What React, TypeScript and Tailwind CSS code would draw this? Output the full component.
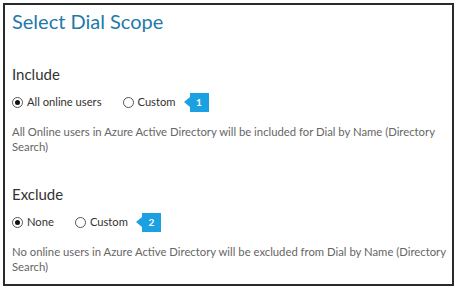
import React from "react";

function Radio({ checked, label }: { checked?: boolean; label: string }) {
  return (
    <label className="flex items-center">
      <span className="w-[11px] h-[11px] rounded-full border border-[#555] flex items-center justify-center bg-white">
        {checked && <span className="w-[5px] h-[5px] rounded-full bg-[#111]" />}
      </span>
      <span className="ml-[4px] text-[11.2px] leading-[20px] text-[#333]">{label}</span>
    </label>
  );
}

function Badge({ n }: { n: string }) {
  return (
    <div className="flex items-center">
      <span className="w-0 h-0 border-y-[5px] border-y-transparent border-r-[6px] border-r-[#1ba1e2]" />
      <span className="w-[19px] h-[19px] bg-[#1ba1e2] text-white text-[10px] font-bold flex items-center justify-center">
        {n}
      </span>
    </div>
  );
}

function Section({
  title,
  first,
  second,
  n,
  desc,
  mt,
}: {
  title: string;
  first: string;
  second: string;
  n: string;
  desc: string;
  mt: string;
}) {
  return (
    <div className={mt}>
      <div className="text-[15px] leading-[20px] text-[#333]">{title}</div>
      <div className="mt-[8px] flex items-center h-[20px]">
        <Radio checked label={first} />
        <div className="ml-[21px]">
          <Radio label={second} />
        </div>
        <div className="ml-[8px]">
          <Badge n={n} />
        </div>
      </div>
      <div className="mt-[12px] text-[11.3px] leading-[15px] text-[#666] pr-[2px]">{desc}</div>
    </div>
  );
}

export default function App() {
  return (
    <div
      className="w-[458px] h-[293px] bg-white pt-[3px] pl-[3px]"
      style={{ fontFamily: 'Lato, "Open Sans", sans-serif' }}
    >
      <div className="w-[451px] h-[283px] border-2 border-[#2a2a2a] pt-[4px] pl-[7px]">
        <div className="text-[20px] leading-[24px] text-[#2379a8]">Select Dial Scope</div>
        <Section
          mt="mt-[31px]"
          title="Include"
          first="All online users"
          second="Custom"
          n="1"
          desc="All Online users in Azure Active Directory will be included for Dial by Name (Directory Search)"
        />
        <Section
          mt="mt-[30px]"
          title="Exclude"
          first="None"
          second="Custom"
          n="2"
          desc="No online users in Azure Active Directory will be excluded from Dial by Name (Directory Search)"
        />
      </div>
    </div>
  );
}
